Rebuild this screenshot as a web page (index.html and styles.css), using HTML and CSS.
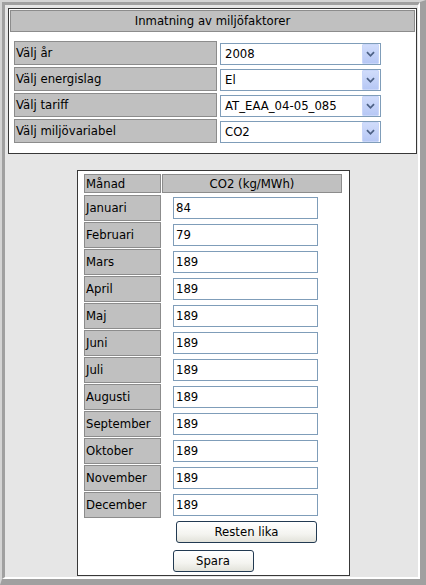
FILE: index.html
```html
<!DOCTYPE html>
<html lang="sv">
<head>
<meta charset="utf-8">
<title>Inmatning av miljöfaktorer</title>
<link rel="stylesheet" href="styles.css">
</head>
<body>
<div class="win">
  <div class="page">
    <div class="panel top-panel">
      <div class="head">Inmatning av miljöfaktorer</div>
      <div class="form-grid">
        <div class="lbl">Välj år</div>
        <div class="sel"><span class="val">2008</span><span class="arrow"><svg width="17" height="20" viewBox="0 0 17 20"><path d="M4.5 8 L8.5 12 L12.5 8" fill="none" stroke="#4d6185" stroke-width="2"/></svg></span></div>
        <div class="lbl">Välj energislag</div>
        <div class="sel"><span class="val">El</span><span class="arrow"><svg width="17" height="20" viewBox="0 0 17 20"><path d="M4.5 8 L8.5 12 L12.5 8" fill="none" stroke="#4d6185" stroke-width="2"/></svg></span></div>
        <div class="lbl">Välj tariff</div>
        <div class="sel"><span class="val">AT_EAA_04-05_085</span><span class="arrow"><svg width="17" height="20" viewBox="0 0 17 20"><path d="M4.5 8 L8.5 12 L12.5 8" fill="none" stroke="#4d6185" stroke-width="2"/></svg></span></div>
        <div class="lbl">Välj miljövariabel</div>
        <div class="sel"><span class="val">CO2</span><span class="arrow"><svg width="17" height="20" viewBox="0 0 17 20"><path d="M4.5 8 L8.5 12 L12.5 8" fill="none" stroke="#4d6185" stroke-width="2"/></svg></span></div>
      </div>
    </div>

    <div class="panel month-panel">
      <div class="month-grid">
        <div class="mhead left">Månad</div>
        <div class="mhead center">CO2 (kg/MWh)</div>
        <div class="mlbl">Januari</div><div class="mval"><div class="inp">84</div></div>
        <div class="mlbl">Februari</div><div class="mval"><div class="inp">79</div></div>
        <div class="mlbl">Mars</div><div class="mval"><div class="inp">189</div></div>
        <div class="mlbl">April</div><div class="mval"><div class="inp">189</div></div>
        <div class="mlbl">Maj</div><div class="mval"><div class="inp">189</div></div>
        <div class="mlbl">Juni</div><div class="mval"><div class="inp">189</div></div>
        <div class="mlbl">Juli</div><div class="mval"><div class="inp">189</div></div>
        <div class="mlbl">Augusti</div><div class="mval"><div class="inp">189</div></div>
        <div class="mlbl">September</div><div class="mval"><div class="inp">189</div></div>
        <div class="mlbl">Oktober</div><div class="mval"><div class="inp">189</div></div>
        <div class="mlbl">November</div><div class="mval"><div class="inp">189</div></div>
        <div class="mlbl">December</div><div class="mval"><div class="inp">189</div></div>
      </div>
      <div class="btn-row-rest"><button class="btn btn-rest">Resten lika</button></div>
      <div class="btn-row-save"><button class="btn btn-save">Spara</button></div>
    </div>
  </div>
</div>
</body>
</html>
```
FILE: styles.css
```css
html, body {
  margin: 0;
  padding: 0;
}
body {
  width: 426px;
  height: 585px;
  overflow: hidden;
  font-family: "DejaVu Sans", Verdana, sans-serif;
  font-size: 11.7px;
  color: #000;
}
.win {
  box-sizing: border-box;
  width: 426px;
  height: 585px;
  border-left: 2px solid #d4d4d4;
  border-top: 2px solid #d4d4d4;
  border-right: 6px solid #a0a0a0;
  border-bottom: 6px solid #a0a0a0;
}
.page {
  box-sizing: border-box;
  height: 100%;
  background: #e6e6e6;
  border-left: 3px solid #a0a0a0;
  border-top: 3px solid #a0a0a0;
  border-right: 2px solid #ffffff;
  border-bottom: 2px solid #ffffff;
  padding: 3px 1px 0 3px;
}
.panel {
  background: #fff;
  border: 1px solid #383838;
}
.top-panel {
  padding: 1px;
}
.head {
  height: 20px;
  line-height: 21px;
  background: #c0c0c0;
  border: 1px solid #8c8c8c;
  text-align: center;
}
.form-grid {
  display: grid;
  grid-template-columns: 203px 161px;
  grid-auto-rows: 24px;
  column-gap: 3px;
  row-gap: 2px;
  padding: 9px 4px 9px 4px;
}
.lbl {
  box-sizing: border-box;
  background: #c0c0c0;
  border: 1px solid #8c8c8c;
  padding-left: 1px;
  line-height: 23px;
}
.sel {
  box-sizing: border-box;
  margin-top: 2px;
  height: 22px;
  border: 1px solid #7f9db9;
  display: flex;
  align-items: stretch;
  justify-content: space-between;
  background: #fff;
}
.val {
  padding-left: 4px;
  line-height: 20px;
}
.arrow {
  box-sizing: border-box;
  width: 17px;
  margin: 0 1px 0 0;
  background: linear-gradient(#d0dcfb, #b7c8f5);
  border: 1px solid #c9d6f9;
  border-radius: 1px;
  display: flex;
  align-items: center;
  justify-content: center;
}
.arrow svg {
  display: block;
}
.month-panel {
  width: 258px;
  margin: 16px 0 0 69px;
  padding: 3px 7px 3px 6px;
}
.month-grid {
  display: grid;
  grid-template-columns: 77px 180px;
  grid-template-rows: 20px;
  grid-auto-rows: 26px;
  column-gap: 1px;
  row-gap: 1px;
}
.mhead {
  box-sizing: border-box;
  background: #c0c0c0;
  border: 1px solid #8c8c8c;
  line-height: 18px;
  margin-bottom: 1px;
}
.mhead.left {
  padding-left: 1px;
}
.mhead.center {
  text-align: center;
}
.mlbl {
  box-sizing: border-box;
  background: #c0c0c0;
  border: 1px solid #8c8c8c;
  padding-left: 1px;
  line-height: 25px;
}
.mval {
  padding: 2px 0 0 11px;
}
.inp {
  box-sizing: border-box;
  width: 145px;
  height: 22px;
  border: 1px solid #7f9db9;
  padding-left: 2px;
  line-height: 21px;
  background: #fff;
}
.btn-row-rest {
  display: flex;
  padding: 3px 0 0 92px;
}
.btn-row-save {
  display: flex;
  justify-content: center;
  padding: 7px 0 0 0;
}
.btn {
  box-sizing: border-box;
  height: 22px;
  margin: 0;
  padding: 0;
  font-family: "DejaVu Sans", Verdana, sans-serif;
  font-size: 11.7px;
  color: #000;
  border: 1px solid #223a52;
  border-radius: 3px;
  background: linear-gradient(#ffffff 0%, #f4f4f0 60%, #e2e2da 100%);
}
.btn-rest {
  width: 141px;
}
.btn-save {
  width: 81px;
}
```
